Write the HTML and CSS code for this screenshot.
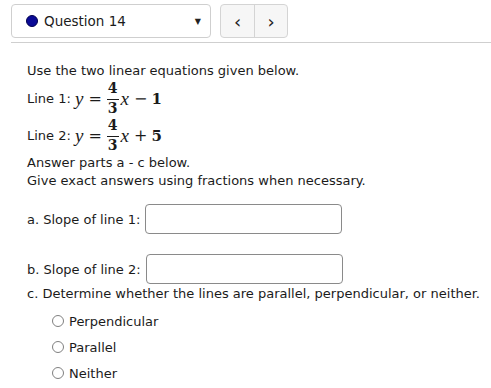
FILE: index.html
```html
<!DOCTYPE html>
<html lang="en">
  <head>
    <meta charset="UTF-8" />
    <title>Question 14</title>
    <link rel="stylesheet" href="styles.css">
  </head>

  <body>
    <div class="toolbar">
      <div class="picker">
        <span class="dot"></span>
        <span class="qname">Question 14</span>
        <span class="caret">&#9660;</span>
      </div>
      <div class="nav">
        <button class="navbtn">&lsaquo;</button>
        <button class="navbtn">&rsaquo;</button>
      </div>
    </div>

    <div class="question">
      <div class="line">Use the two linear equations given below.</div>
      <div class="line eq">
        Line 1:&nbsp;<span class="math"><i>y</i><span class="op">=</span><span class="frac"><span class="num">4</span><span class="den">3</span></span><i>x</i><span class="op">&minus;</span>1</span>
      </div>
      <div class="line eq">
        Line 2:&nbsp;<span class="math"><i>y</i><span class="op">=</span><span class="frac"><span class="num">4</span><span class="den">3</span></span><i>x</i><span class="op">+</span>5</span>
      </div>
      <div class="line">Answer parts a - c below.</div>
      <div class="line">Give exact answers using fractions when necessary.</div>

      <div class="part part-a">
        <label>a. Slope of line 1:</label>
        <input class="answer" type="text" />
      </div>
      <div class="part part-b">
        <label>b. Slope of line 2:</label>
        <input class="answer" type="text" />
      </div>

      <div class="line">c. Determine whether the lines are parallel, perpendicular, or neither.</div>
      <div class="choices">
        <label class="choice"><span class="radio"></span>Perpendicular</label>
        <label class="choice"><span class="radio"></span>Parallel</label>
        <label class="choice"><span class="radio"></span>Neither</label>
      </div>
    </div>
  </body>
</html>
```

FILE: styles.css
```css
* {
  margin: 0;
  padding: 0;
  box-sizing: border-box;
}

body {
  font-family: "DejaVu Sans", sans-serif;
  font-size: 13px;
  color: #1b1b1b;
  background: #fff;
}

.toolbar {
  display: flex;
  gap: 9px;
  margin-left: 11px;
  padding: 4px 0 4px;
  border-bottom: 1px solid #cfcfcf;
}

.picker {
  width: 200px;
  height: 34px;
  border: 1px solid #cfcfcf;
  border-radius: 4px;
  display: flex;
  align-items: center;
  padding: 0 9px 0 14px;
}

.dot {
  width: 12px;
  height: 12px;
  border-radius: 50%;
  background: #0a0a96;
  border: 1px solid #000050;
  margin-right: 6px;
}

.qname {
  flex: 1;
  font-size: 13.5px;
}

.caret {
  font-size: 8px;
  color: #222;
}

.nav {
  display: flex;
  height: 34px;
  border: 1px solid #d4d4d4;
  border-radius: 4px;
  background: #f6f6f6;
}

.navbtn {
  width: 33px;
  border: none;
  background: none;
  font-family: "DejaVu Sans", sans-serif;
  font-size: 18px;
  color: #222;
}

.navbtn + .navbtn {
  border-left: 1px solid #d4d4d4;
}

.question {
  padding: 19px 0 0 27px;
}

.line {
  line-height: 18px;
}

.eq {
  display: flex;
  align-items: center;
  height: 37px;
}

.math {
  display: flex;
  align-items: center;
  font-family: "DejaVu Serif", serif;
  font-size: 15px;
  font-weight: bold;
}

.math i {
  font-family: "Liberation Serif", serif;
  font-size: 19px;
  font-weight: normal;
  padding-right: 1px;
}

.op {
  padding: 0 4px;
  font-weight: normal;
  font-size: 16px;
}

.frac {
  display: inline-flex;
  flex-direction: column;
  align-items: center;
  font-size: 14px;
  line-height: 15px;
  margin: 0 2px 0 1px;
}

.num {
  padding: 1px 1px 3px;
  border-bottom: 1px solid #1b1b1b;
}

.den {
  padding: 1px 1px 1px;
}

.part {
  display: flex;
  align-items: center;
  gap: 5px;
}

.part-a {
  margin-top: 14px;
}

.part-b {
  margin-top: 20px;
  margin-bottom: 1px;
}

.answer {
  width: 197px;
  height: 30px;
  border: 1px solid #8a8a8a;
  border-radius: 4px;
}

.choices {
  padding: 5px 0 0 25px;
}

.choice {
  display: flex;
  align-items: center;
  height: 26px;
}

.radio {
  width: 12px;
  height: 12px;
  border: 1px solid #808080;
  border-radius: 50%;
  margin-right: 5px;
}
```
